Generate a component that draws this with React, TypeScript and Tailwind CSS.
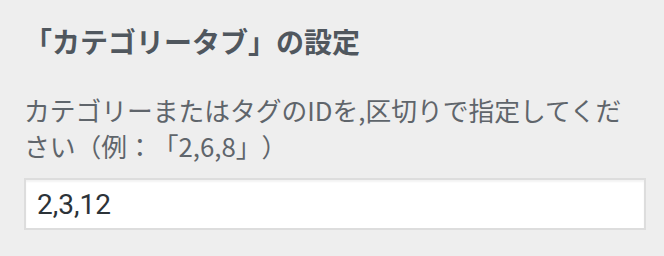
export default function App() {
  return (
    <div
      className="w-[664px] h-[256px] bg-[#eeeeee] pl-6 pr-[18px] pt-[21px] [text-spacing-trim:space-all]"
      style={{ fontFamily: '"Noto Sans CJK JP", "Noto Sans", sans-serif' }}
    >
      <h2 className="text-[28px] leading-[40px] font-bold text-[#50575e]">
        「カテゴリータブ」の設定
      </h2>
      <p className="mt-[31px] text-[25.75px] leading-[36px] text-[#5f656b] whitespace-nowrap">
        カテゴリーまたはタグのIDを,区切りで指定してくだ
        <br />
        さい（例：「2,6,8」）
      </p>
      <input
        type="text"
        defaultValue="2,3,12"
        className="mt-[14px] block w-full h-[52px] border-2 border-[#dddddd] bg-white px-[11px] text-[28px] text-[#2c3338] shadow-[inset_0_2px_2px_rgba(0,0,0,0.05)] outline-none"
        style={{ fontFamily: 'Roboto, "Liberation Sans", sans-serif' }}
      />
    </div>
  );
}
